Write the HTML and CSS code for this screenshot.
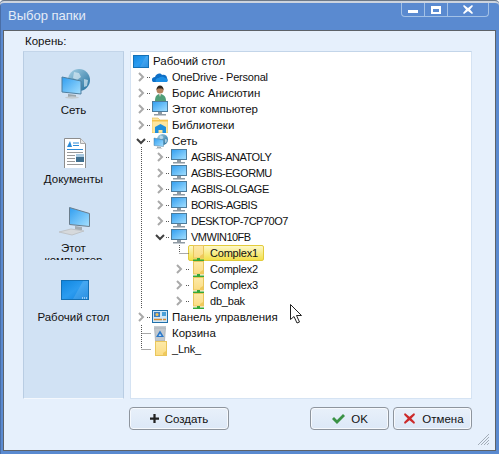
FILE: index.html
```html
<!DOCTYPE html>
<html lang="ru">
  <head>
    <meta charset="UTF-8" />
    <title>Выбор папки</title>
    <link rel="stylesheet" href="styles.css">
  </head>
  <body>
    <svg class="defs" xmlns="http://www.w3.org/2000/svg">
      <defs>
        <linearGradient id="screen" x1="0" y1="0" x2="1" y2="1">
          <stop offset="0" stop-color="#2f9df0" />
          <stop offset="1" stop-color="#a5e0ff" />
        </linearGradient>
        <linearGradient id="globe" x1="0" y1="0" x2="1" y2="1">
          <stop offset="0" stop-color="#a8d2e6" />
          <stop offset="1" stop-color="#1f6d9c" />
        </linearGradient>
        <linearGradient id="desk" x1="0" y1="0" x2="1" y2="1">
          <stop offset="0" stop-color="#0f86e0" />
          <stop offset="0.5" stop-color="#2c9cf0" />
          <stop offset="1" stop-color="#0d7fdc" />
        </linearGradient>
        <linearGradient id="fold" x1="0" y1="0" x2="0" y2="1">
          <stop offset="0" stop-color="#fdeaa8" />
          <stop offset="1" stop-color="#fbdc84" />
        </linearGradient>
      </defs>
      <symbol id="i-net" viewBox="0 0 32 32">
        <circle cx="21" cy="13" r="11" fill="url(#globe)" />
        <path d="M16 5l5 1 2 4-4 3-4-2zM26 12l4 1-1 6-3 1z" fill="#d5e8f2" opacity=".7" />
        <path d="M4 10l19 4v13L4 25z" fill="url(#screen)" stroke="#4f7f9f" />
        <path d="M10 27l8 1v2h-8z" fill="#9aa6ad" />
        <ellipse cx="14" cy="30.5" rx="7" ry="1.2" fill="#c3cbd0" />
      </symbol>
      <symbol id="i-doc" viewBox="0 0 32 32">
        <path d="M6.500 2.500h16l5 5v25h-21z" fill="#fff" stroke="#8d8d8d" />
        <path d="M22.500 2.500v5h5" fill="#e6e6e6" stroke="#a8a8a8" />
        <path d="M9 11l3-6 2 6z" fill="#2a8ad8" />
        <path d="M15 7h6M15 9.500h6" stroke="#2a8ad8" />
        <path d="M9 13.500h16" stroke="#2a8ad8" />
        <path d="M9 16.500h16M9 19.500h8M9 22.500h8M9 25.500h8M9 28.500h16" stroke="#9a9a9a" />
        <rect x="18" y="18" width="8" height="8" fill="#3f6f8f" />
        <rect x="18" y="18" width="8" height="3" fill="#a9c9e0" />
      </symbol>
      <symbol id="i-pc" viewBox="0 0 32 32">
        <path d="M11.500 2.500l20 6v13l-20-2z" fill="url(#screen)" stroke="#6a7d8c" />
        <path d="M17 21l7 1v3h-7z" fill="#a5adb3" />
        <path d="M1 27l12-3 13 2-12 4z" fill="#d6d9dc" stroke="#c0c4c8" />
      </symbol>
      <symbol id="i-desk" viewBox="0 0 32 32">
        <rect x="3.500" y="6.500" width="27" height="19" fill="url(#desk)" stroke="#1470b5" />
        <path d="M15 25l10-18h5v18z" fill="#fff" opacity=".12" />
        <path d="M24 24h1M26 24h1M28 24h1" stroke="#fff" />
      </symbol>
      <symbol id="i-desk-s" viewBox="0 0 16 16">
        <rect x=".5" y="2.500" width="15" height="12" fill="url(#desk)" stroke="#1470b5" />
        <path d="M7 14l6-11h2v11z" fill="#fff" opacity=".12" />
      </symbol>
      <symbol id="i-mon" viewBox="0 0 16 16">
        <rect x=".5" y=".5" width="15" height="10" fill="url(#screen)" stroke="#4d7c9c" />
        <rect x="6" y="11" width="4" height="2" fill="#8f9aa3" />
        <rect x="2" y="13" width="12" height="1" fill="#8f9aa3" />
        <rect x="2" y="14" width="12" height="1" fill="#c5ccd2" />
      </symbol>
      <symbol id="i-cloud" viewBox="0 0 16 16">
        <path d="M1 13C-1 11 0 8 3 8c1-3 5-5 7-2 3-1 5 1 5 3 1 2 1 4-1 4z" fill="#0f6fc6" />
        <path d="M4 13c-1-2 0-4 3-4 2-2 5-1 6 0 2 0 3 2 2 4z" fill="#1c8fe6" />
      </symbol>
      <symbol id="i-user" viewBox="0 0 16 16">
        <path d="M3 16c0-5 2-7 5-7s6 2 6 7z" fill="#4f9e78" />
        <path d="M7 9h2l-1 3z" fill="#e5d8c8" />
        <circle cx="8" cy="5" r="3.500" fill="#b5835f" />
        <path d="M4.500 5c0-3 1.500-4.500 3.500-4.500S11.500 2 11.500 5L10 3.500H6z" fill="#33261c" />
      </symbol>
      <symbol id="i-lib" viewBox="0 0 16 16">
        <path d="M0 1h6l2 2h8v13H0z" fill="#fde6a0" stroke="#e2b94a" stroke-width=".6" />
        <rect x="0" y="3" width="16" height="1.500" fill="#f4c24a" />
        <path d="M3 10l5.500-3 5.500 3v6h-3.500v-3h-4v3H3z" fill="#1e8fdc" />
      </symbol>
      <symbol id="i-panel" viewBox="0 0 16 16">
        <rect x=".5" y="1.500" width="15" height="12" fill="#cfe6f7" stroke="#1f6fa8" />
        <rect x="2" y="3" width="6" height="5" fill="#3d7fc0" />
        <rect x="10" y="3" width="4" height="4" fill="#4aa0d8" />
        <circle cx="5" cy="5.500" r="1.500" fill="#f3c35a" />
        <path d="M2 10.500h8M11 10.500h3" stroke="#d7892f" stroke-width="1.500" />
      </symbol>
      <symbol id="i-bin" viewBox="0 0 16 16">
        <path d="M2 1h12v2H2z" fill="#c6ccd1" />
        <path d="M2.500 3h11l-1 13h-9z" fill="#c3c9ce" stroke="#9aa1a8" stroke-width=".6" />
        <path d="M8 5.500l4 6.500H4z" fill="#2a78c8" />
        <path d="M8 8.500l1.500 2.500h-3z" fill="#c3d9ee" />
      </symbol>
      <symbol id="i-folder" viewBox="0 0 16 16">
        <rect x="3.500" y=".5" width="11" height="14" fill="url(#fold)" stroke="#e9c65c" />
        <path d="M14 10v4h-3v-2z" fill="#f0c95c" />
      </symbol>
      <symbol id="i-share" viewBox="0 0 16 16">
        <rect x="3.500" y=".5" width="10" height="12.500" fill="url(#fold)" stroke="#e9c65c" />
        <path d="M13 9v4h-3v-2z" fill="#f0c95c" />
        <rect x="7" y="13" width="3" height="3" fill="#37a837" />
        <rect x="3" y="14.500" width="11" height="1.500" fill="#37a837" />
      </symbol>
      <symbol id="i-right" viewBox="0 0 10 10">
        <path d="M3 1l4 4-4 4" fill="none" stroke="#a9a9a9" stroke-width="2" />
      </symbol>
      <symbol id="i-down" viewBox="0 0 10 10">
        <path d="M1 3l4 4 4-4" fill="none" stroke="#404040" stroke-width="2" />
      </symbol>
    </svg>

    <div class="window">
      <div class="titlebar">
        <span class="title">Выбор папки</span>
        <div class="caption-btns">
          <div class="caption-btn"><span class="cap-min"></span></div>
          <div class="caption-btn"><span class="cap-max"></span></div>
          <div class="caption-btn cap-wide">
            <svg class="cap-close" viewBox="0 0 10 9"><path d="M1 0l4 3 4-3 1 1-3 3.500 3 3.500-1 1-4-3-4 3-1-1 3-3.500-3-3.500z" fill="#fff" /></svg>
          </div>
        </div>
      </div>

      <div class="client">
        <div class="root-label">Корень:</div>
        <div class="main">
          <div class="sidebar">
            <div class="side-item">
              <svg class="side-icon"><use href="#i-net" /></svg>
              <div class="side-text">Сеть</div>
            </div>
            <div class="side-item">
              <svg class="side-icon"><use href="#i-doc" /></svg>
              <div class="side-text">Документы</div>
            </div>
            <div class="side-item">
              <svg class="side-icon"><use href="#i-pc" /></svg>
              <div class="side-text">Этот компьютер</div>
            </div>
            <div class="side-item">
              <svg class="side-icon"><use href="#i-desk" /></svg>
              <div class="side-text">Рабочий стол</div>
            </div>
          </div>

          <div class="tree">
            <div class="row"><svg class="ico"><use href="#i-desk-s" /></svg><span class="lbl">Рабочий стол</span></div>
            <div class="row"><span class="twist"><svg class="chev"><use href="#i-right" /></svg></span><svg class="ico"><use href="#i-cloud" /></svg><span class="lbl lat">OneDrive - Personal</span></div>
            <div class="row"><span class="twist"><svg class="chev"><use href="#i-right" /></svg></span><svg class="ico"><use href="#i-user" /></svg><span class="lbl">Борис Анисютин</span></div>
            <div class="row"><span class="twist"><svg class="chev"><use href="#i-right" /></svg></span><svg class="ico"><use href="#i-mon" /></svg><span class="lbl">Этот компьютер</span></div>
            <div class="row"><span class="twist"><svg class="chev"><use href="#i-right" /></svg></span><svg class="ico"><use href="#i-lib" /></svg><span class="lbl">Библиотеки</span></div>
            <div class="row"><span class="twist"><svg class="chev"><use href="#i-down" /></svg></span><svg class="ico"><use href="#i-net" /></svg><span class="lbl">Сеть</span></div>
            <div class="row lvl2"><span class="twist"><svg class="chev"><use href="#i-right" /></svg></span><svg class="ico"><use href="#i-mon" /></svg><span class="lbl caps">AGBIS-ANATOLY</span></div>
            <div class="row lvl2"><span class="twist"><svg class="chev"><use href="#i-right" /></svg></span><svg class="ico"><use href="#i-mon" /></svg><span class="lbl caps">AGBIS-EGORMU</span></div>
            <div class="row lvl2"><span class="twist"><svg class="chev"><use href="#i-right" /></svg></span><svg class="ico"><use href="#i-mon" /></svg><span class="lbl caps">AGBIS-OLGAGE</span></div>
            <div class="row lvl2"><span class="twist"><svg class="chev"><use href="#i-right" /></svg></span><svg class="ico"><use href="#i-mon" /></svg><span class="lbl caps">BORIS-AGBIS</span></div>
            <div class="row lvl2"><span class="twist"><svg class="chev"><use href="#i-right" /></svg></span><svg class="ico"><use href="#i-mon" /></svg><span class="lbl caps">DESKTOP-7CP70O7</span></div>
            <div class="row lvl2"><span class="twist"><svg class="chev"><use href="#i-down" /></svg></span><svg class="ico"><use href="#i-mon" /></svg><span class="lbl caps">VMWIN10FB</span></div>
            <div class="row lvl3"><span class="twist"></span><span class="selected"><svg class="ico"><use href="#i-share" /></svg><span class="lbl lat">Complex1</span></span></div>
            <div class="row lvl3"><span class="twist"><svg class="chev"><use href="#i-right" /></svg></span><svg class="ico"><use href="#i-share" /></svg><span class="lbl lat">Complex2</span></div>
            <div class="row lvl3"><span class="twist"><svg class="chev"><use href="#i-right" /></svg></span><svg class="ico"><use href="#i-share" /></svg><span class="lbl lat">Complex3</span></div>
            <div class="row lvl3"><span class="twist"><svg class="chev"><use href="#i-right" /></svg></span><svg class="ico"><use href="#i-share" /></svg><span class="lbl lat">db_bak</span></div>
            <div class="row"><span class="twist"><svg class="chev"><use href="#i-right" /></svg></span><svg class="ico"><use href="#i-panel" /></svg><span class="lbl">Панель управления</span></div>
            <div class="row"><span class="twist"></span><svg class="ico"><use href="#i-bin" /></svg><span class="lbl">Корзина</span></div>
            <div class="row"><span class="twist"></span><svg class="ico"><use href="#i-folder" /></svg><span class="lbl lat">_Lnk_</span></div>

            <!-- dotted tree guides and the mouse pointer, in screen coordinates -->
            <svg class="tree-overlay" viewBox="131 52 340 346">
              <path class="guide" d="M141.500 147v162M141.500 325v24M141.500 333.500h10M141.500 349.500h10
                M147 77.500h4M147 93.500h4M147 109.500h4M147 125.500h4M147 141.500h4M147 317.500h4
                M166 157.500h4M166 173.500h4M166 189.500h4M166 205.500h4M166 221.500h4M166 237.500h4
                M179.500 245v8M179.500 253.500h9M186 269.500h4M186 285.500h4M186 301.500h4" />
              <path d="M290.500 304.500v15l3.500-3 3 6.500 2.500-1-3-6.500h5z" fill="#fff" stroke="#222" />
            </svg>
          </div>
        </div>

        <div class="footer">
          <button class="btn btn-new"><svg class="btn-ico plus-ico" viewBox="0 0 12 12"><path d="M4.500 0h3v4.500H12v3H7.500V12h-3V7.500H0v-3h4.500z" fill="#222" /></svg>Создать</button>
          <button class="btn btn-ok"><svg class="btn-ico ok-ico" viewBox="0 0 14 12"><path d="M1 6l2-2 3 3 6-6 2 2-8 8z" fill="#3a9245" /></svg>OK</button>
          <button class="btn btn-cancel"><svg class="btn-ico" viewBox="0 0 12 12"><path d="M1 0l5 4 5-4 1 2-4 4 4 4-1 2-5-4-5 4-1-2 4-4-4-4z" fill="#cc2a2a" /></svg>Отмена</button>
        </div>

        <svg class="grip" viewBox="0 0 13 13"><path d="M1 12L12 1M4 12l8-8M7 12l5-5M10 12l2-2" stroke="#a3adb8" /></svg>
      </div>
    </div>
  </body>
</html>
```

FILE: styles.css
```css
html,
body {
  margin: 0;
  padding: 0;
}
body {
  width: 499px;
  height: 454px;
  overflow: hidden;
  font-family: "Liberation Sans", "Noto Sans", sans-serif;
  font-size: 11.5px;
  color: #111;
}
.defs {
  position: absolute;
  width: 0;
  height: 0;
}
.window {
  display: flex;
  flex-direction: column;
  height: 454px;
  padding-top: 2px;
  box-sizing: border-box;
  background: #5a8ad0;
  border-top: 1px solid #6d7988;
  border-radius: 4px 4px 0 0;
  box-shadow: inset 0 2px #cdd4de, inset 1px 0 #4a6ea6;
}
.titlebar {
  display: flex;
  justify-content: space-between;
  align-items: flex-start;
  height: 27px;
  flex: none;
}
.title {
  margin: 3px 0 0 8px;
  color: #e4ecf7;
  font-size: 13px;
  line-height: 20px;
}
.caption-btns {
  display: flex;
  height: 13px;
  margin-right: 10px;
  border: 1px solid #a3c1e6;
  border-top: none;
  border-radius: 0 0 4px 4px;
}
.caption-btn {
  display: flex;
  justify-content: center;
  width: 22px;
  border-right: 1px solid #a3c1e6;
}
.caption-btn.cap-wide {
  width: 40px;
  border-right: none;
}
.cap-min {
  width: 10px;
  height: 3px;
  margin-top: 7px;
  background: #fff;
}
.cap-max {
  width: 6px;
  height: 3px;
  margin-top: 3px;
  border: 2px solid #fff;
  border-top-width: 3px;
}
.cap-close {
  width: 10px;
  height: 9px;
  margin-top: 2px;
}
.client {
  position: relative;
  display: flex;
  flex-direction: column;
  flex: 1;
  margin: 0 3px 3px 3px;
  padding: 3px 23px 0 19px;
  background: #e6f0fc;
  border: 1px solid #5d6268;
}
.root-label {
  height: 17px;
  padding-left: 2px;
  line-height: 14px;
}
.main {
  display: flex;
  gap: 6px;
  height: 348px;
}
.sidebar {
  width: 101px;
  flex: none;
  box-sizing: border-box;
  padding-top: 1px;
  background: #d1e2f4;
  border-left: 1px solid #b9cde3;
  border-right: 1px solid #b9cde3;
  border-top: 1px solid #c3d5e9;
  border-bottom: 1px solid #f4f8fd;
  text-align: center;
}
.side-item {
  height: 69px;
  box-sizing: border-box;
  padding: 14px 14px 0;
  overflow: hidden;
}
.side-icon {
  display: block;
  width: 32px;
  height: 32px;
  margin: 0 auto;
}
.side-text {
  margin: 5px -6px 0;
  line-height: 12px;
}
.tree {
  position: relative;
  flex: 1;
  box-sizing: border-box;
  padding: 1px 0 0 2px;
  background: #fff;
  border: 1px solid #d5e3f3;
  border-top-color: #c3d5e9;
  overflow: hidden;
}
.tree-overlay {
  position: absolute;
  top: 0;
  left: 0;
  width: 340px;
  height: 346px;
  pointer-events: none;
}
.guide {
  fill: none;
  stroke: #555;
  stroke-dasharray: 1 1;
}
.row {
  display: flex;
  align-items: center;
  height: 16px;
}
.lvl2 {
  padding-left: 19px;
}
.lvl3 {
  padding-left: 38px;
}
.twist {
  display: flex;
  width: 19px;
  height: 16px;
  flex: none;
  align-items: center;
  padding-left: 3px;
  box-sizing: border-box;
}
.chev {
  width: 10px;
  height: 10px;
}
.ico {
  width: 16px;
  height: 16px;
  flex: none;
}
.lbl {
  margin-left: 4px;
  white-space: nowrap;
}
.lat {
  font-size: 11px;
  letter-spacing: -0.2px;
}
.caps {
  font-size: 11px;
  letter-spacing: -0.5px;
}
.selected {
  display: flex;
  align-items: center;
  height: 14px;
  margin-left: -2px;
  padding: 0 5px 0 1px;
  background: linear-gradient(#fdf8c8, #f3e04a);
  border: 1px solid #e3cb3a;
  border-radius: 2px;
}
.footer {
  display: flex;
  gap: 4px;
  margin: 8px 0 0 106px;
}
.btn {
  display: flex;
  align-items: center;
  justify-content: center;
  height: 23px;
  padding: 0;
  background: linear-gradient(#e8f0fa, #dce8f7);
  border: 1px solid #8e959e;
  border-radius: 4px;
  box-shadow: inset 0 0 0 1px #f6f9fd;
  color: #111;
  font: inherit;
}
.btn-new {
  width: 100px;
}
.btn-ok {
  width: 79px;
  margin-left: auto;
}
.btn-cancel {
  width: 79px;
  padding-left: 3px;
}
.btn-ico {
  width: 11px;
  height: 11px;
  margin-right: 7px;
}
.plus-ico {
  width: 9px;
  height: 9px;
  margin-right: 6px;
}
.ok-ico {
  width: 14px;
  height: 12px;
  margin-right: 6px;
}
.grip {
  position: absolute;
  right: 5px;
  bottom: 4px;
  width: 13px;
  height: 13px;
}
```
